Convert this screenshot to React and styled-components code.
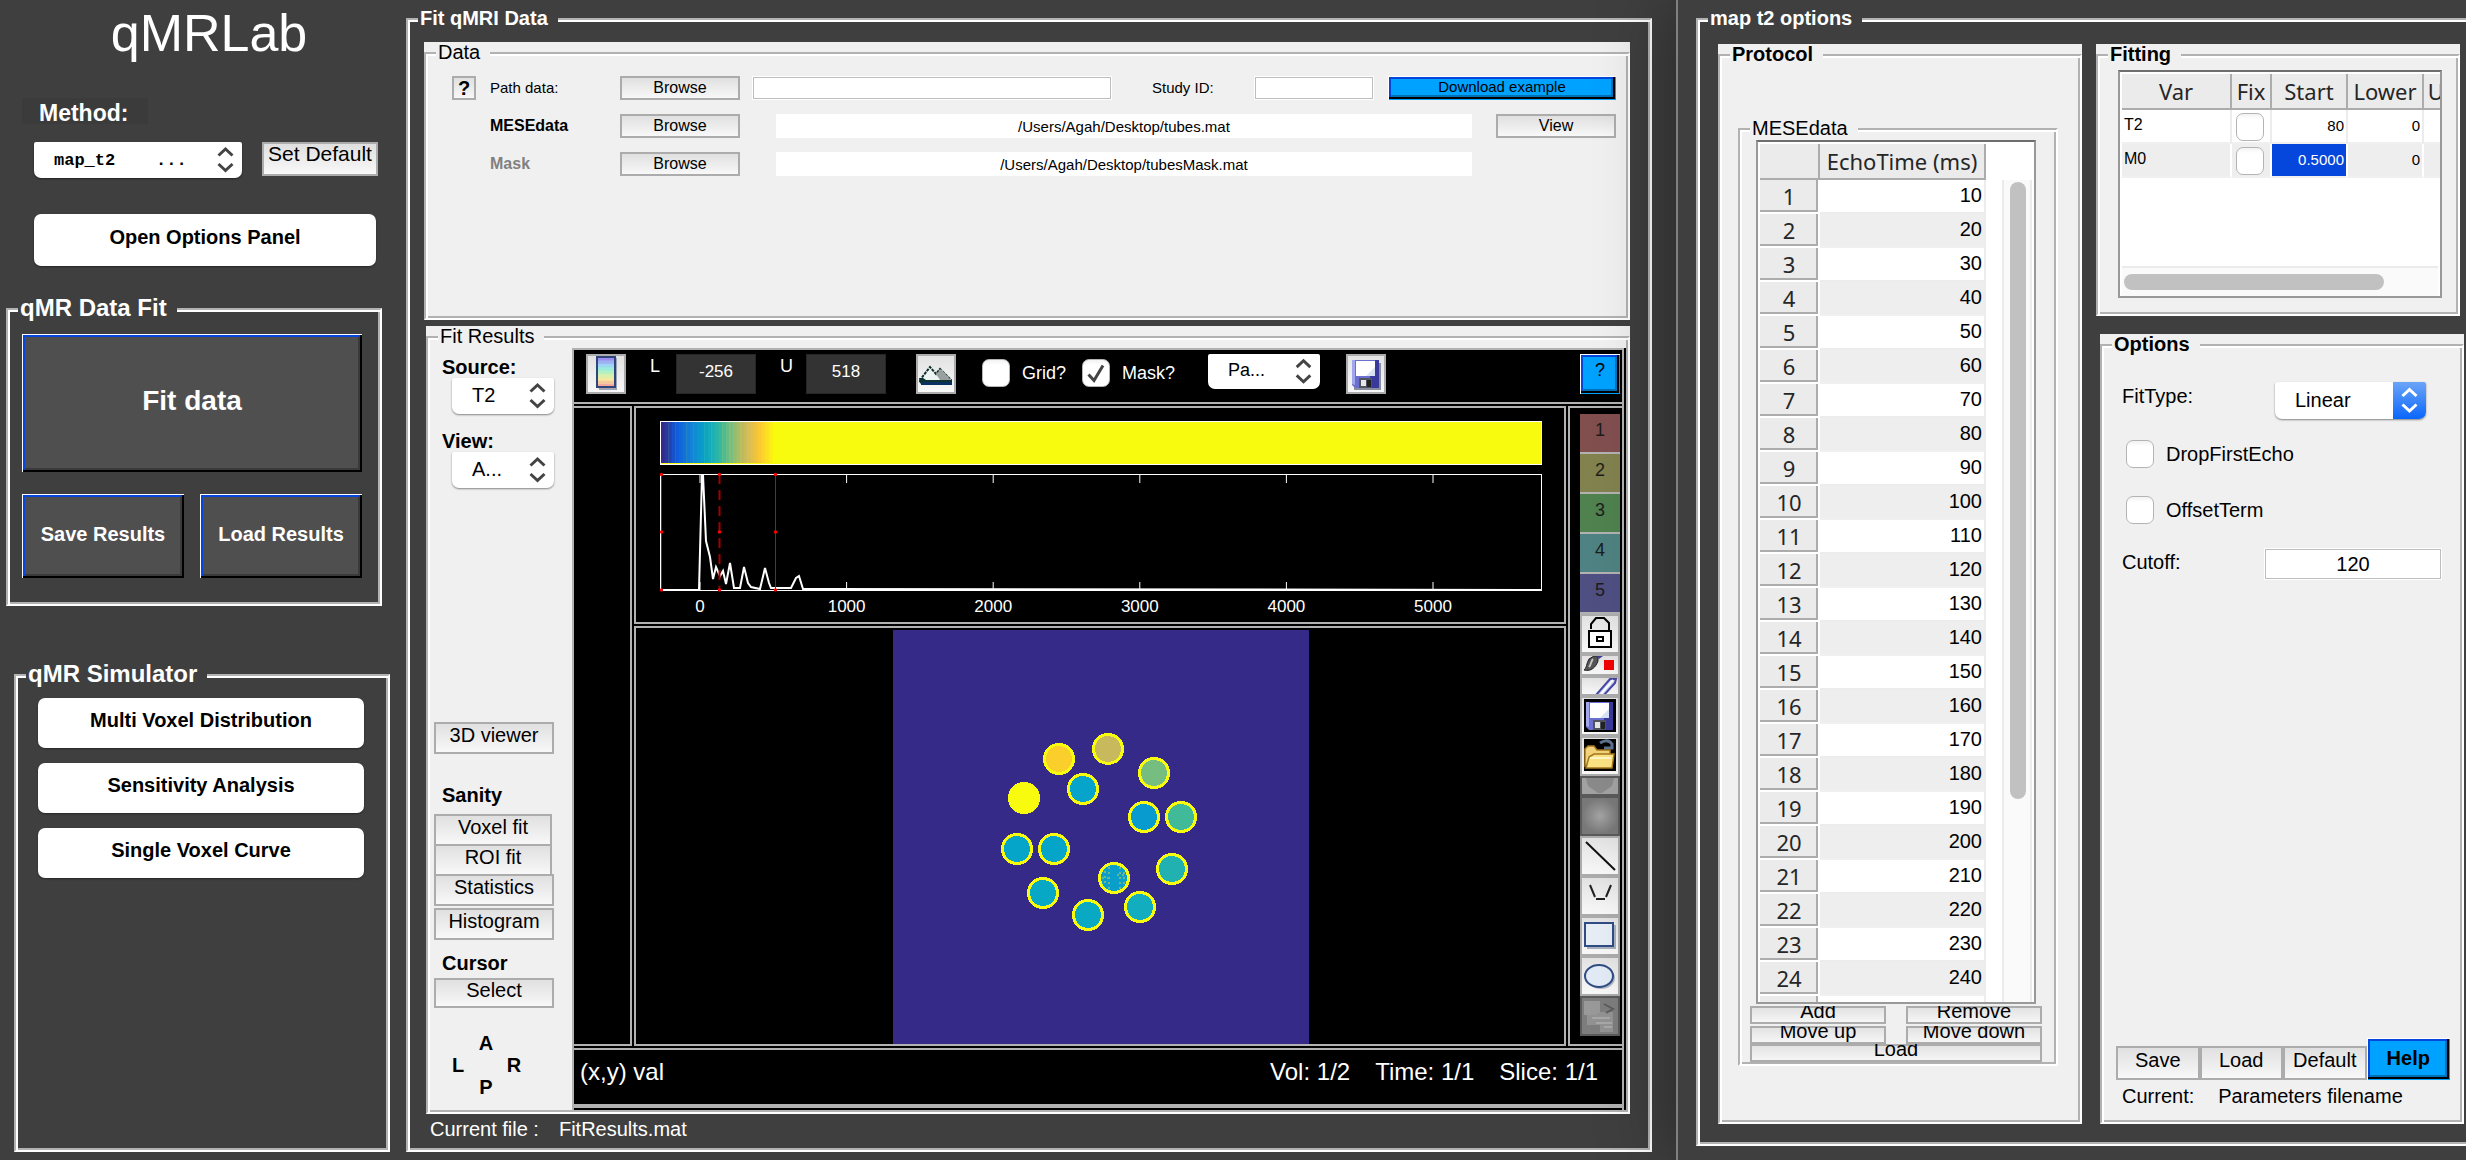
import React from 'react';
import styled, { createGlobalStyle, css } from 'styled-components';

const C = {
  dark: '#3f3f3f',
  light: '#f0f0f0',
  line: '#b2b2b2',
  blue: '#0547dc',
  sky: '#00a2ff',
};

const Global = createGlobalStyle`
  *, *::before, *::after { box-sizing: border-box; }
  html, body { margin: 0; padding: 0; background: ${C.dark}; }
  body, button, input, select, table {
    font-family: "Liberation Sans", Arial, Helvetica, sans-serif;
    font-size: 20px;
    color: #000;
  }
  button, input, select { margin: 0; padding: 0; border: 0; border-radius: 0; }
  h1, h2 { margin: 0; }
`;

/* ---------- shared parts ---------- */

const Etched = styled.fieldset`
  margin: 0;
  padding: 0 2px 2px;
  min-width: 0;
  min-height: 0;
  flex: 1 1 auto;
  display: flex;
  flex-direction: column;
  border: 2px solid;
  border-color: ${C.line} #fff #fff ${C.line};
  box-shadow: inset 2px 2px 0 #fff, inset -2px -2px 0 ${C.line};
`;

const Legend = styled.legend`
  margin-left: 8px;
  padding: 0 10px 2px 2px;
  line-height: 20px;
  font-size: ${(p) => (p.$large ? 24 : 20)}px;
  font-weight: ${(p) => (p.$bold ? 700 : 400)};
  color: ${(p) => (p.$onDark ? '#fff' : '#000')};
  background: ${(p) => (p.$onDark ? C.dark : C.light)};
  white-space: nowrap;
`;

const Sheet = styled.div`
  display: flex;
  flex-direction: column;
  background: ${C.light};
  min-width: 0;
`;

const Button = styled.button`
  display: block;
  width: ${(p) => p.$w || '100%'};
  height: ${(p) => p.$h || 32}px;
  padding-bottom: ${(p) => (p.$lift === undefined ? 6 : p.$lift)}px;
  border: 2px solid #acacac;
  background: linear-gradient(#e0e0e0, #f8f8f8);
  font-size: ${(p) => p.$size || 20}px;
  font-weight: ${(p) => (p.$bold ? 700 : 400)};
  line-height: 20px;
  white-space: nowrap;
`;

const RoundButton = styled.button`
  width: 100%;
  height: ${(p) => p.$h}px;
  padding-bottom: 6px;
  border-radius: 7px;
  background: #fff;
  font-weight: 700;
  box-shadow: 0 1px 2px rgba(0, 0, 0, 0.4);
`;

const DarkButton = styled.button`
  width: 100%;
  height: ${(p) => p.$h}px;
  padding-bottom: 4px;
  background: #4f4f4f;
  color: #fff;
  font-weight: 700;
  font-size: ${(p) => p.$size}px;
  box-shadow: inset 1px 1px 0 #fff, inset -2px -2px 0 #000, inset 3px 3px 0 ${C.blue},
    inset -4px -4px 0 #3a3a3a;
`;

const SkyButton = styled.button`
  width: ${(p) => (p.$w ? `${p.$w}px` : '100%')};
  height: ${(p) => p.$h}px;
  padding-bottom: ${(p) => p.$lift || 0}px;
  background: ${C.sky};
  font-size: ${(p) => p.$size}px;
  font-weight: ${(p) => (p.$bold ? 700 : 400)};
  box-shadow: inset 1px 1px 0 #fff, inset -1px -1px 0 ${C.sky}, inset -3px -3px 0 #000,
    inset 3px 3px 0 ${C.blue}, inset -5px -5px 0 #0072b8;
`;

const TextField = styled.input`
  width: 100%;
  min-width: 0;
  height: ${(p) => p.$h || 24}px;
  background: #fff;
  text-align: center;
  font-size: ${(p) => p.$size || 15}px;
  outline: 0;
  ${(p) =>
    p.$framed &&
    css`
      box-shadow: inset 0 0 0 1px #fff, inset 0 0 0 2px #bdbdbd;
    `}
`;

const PopupWrap = styled.span`
  position: relative;
  display: block;
  flex: none;
  width: ${(p) => p.$w}px;
  height: ${(p) => p.$h}px;
`;

const PopupSelect = styled.select`
  appearance: none;
  width: 100%;
  height: 100%;
  padding: 0 0 ${(p) => p.$lift || 0}px 20px;
  border-radius: 2px 2px 7px 7px;
  background: #fff;
  box-shadow: 0 1px 2px rgba(0, 0, 0, 0.45);
  ${(p) =>
    p.$mono &&
    css`
      font-family: "Liberation Mono", "Courier New", monospace;
      font-size: 17px;
      font-weight: 700;
    `}
  ${(p) => p.$size && css`font-size: ${p.$size}px;`}
`;

const PopupArrows = styled.svg`
  position: absolute;
  top: 0;
  right: 0;
  width: 33px;
  height: 100%;
  pointer-events: none;
  border-radius: 0 2px 7px 0;
  background: ${(p) => (p.$blue ? 'linear-gradient(#6ba5f8, #0a66fb)' : 'none')};
  stroke: ${(p) => (p.$blue ? '#fff' : '#444')};
`;

function Popup({ label, options, w, h, lift, mono, size, blue, id }) {
  return (
    <PopupWrap $w={w} $h={h}>
      <PopupSelect id={id} aria-label={label} $lift={lift} $mono={mono} $size={size}>
        {options.map((o) => (
          <option key={o}>{o}</option>
        ))}
      </PopupSelect>
      <PopupArrows $blue={blue} viewBox="0 0 33 36" fill="none" strokeWidth="3" aria-hidden="true">
        <path d="M9.500 13.500 L16.500 7 L23.500 13.500 M9.500 22 L16.500 28.500 L23.500 22" />
      </PopupArrows>
    </PopupWrap>
  );
}

const TickWrap = styled.span`
  position: relative;
  display: block;
  flex: none;
  width: 28px;
  height: 28px;
  & > svg {
    position: absolute;
    inset: 0;
    pointer-events: none;
  }
`;

const TickInput = styled.input`
  appearance: none;
  display: block;
  width: 28px;
  height: 28px;
  border: 1px solid #b4b4b4;
  border-radius: 7px;
  background: linear-gradient(#f2f2f2, #fff 20%);
`;

function Tick({ id, label, checked }) {
  return (
    <TickWrap>
      <TickInput type="checkbox" id={id} aria-label={label} defaultChecked={checked} />
      {checked && (
        <svg viewBox="0 0 28 28" fill="none" stroke="#444" strokeWidth="3" aria-hidden="true">
          <path d="M6.500 15.500 L12 21.500 L21 6.500" />
        </svg>
      )}
    </TickWrap>
  );
}

/* ---------- page ---------- */

const Page = styled.div`
  display: grid;
  grid-template-columns: 398px minmax(0, 1fr) 790px;
  min-height: 100vh;
  background: ${C.dark};
  overflow: hidden;
`;

/* ---------- side bar ---------- */

const SideBar = styled.aside`
  display: flex;
  flex-direction: column;
  padding: 3px 0 8px;
`;

const Title = styled.h1`
  padding-left: 20px;
  text-align: center;
  color: #fff;
  font-size: 52px;
  font-weight: 400;
  line-height: 60px;
`;

const MethodLabel = styled.label`
  width: 126px;
  height: 26px;
  margin: 35px 0 18px 22px;
  padding: 4px 0 0 17px;
  background: #3b3b3b;
  color: #fff;
  font-size: 23px;
  font-weight: 700;
  line-height: 22px;
`;

const MethodRow = styled.div`
  display: flex;
  gap: 20px;
  padding: 0 20px 36px 34px;
`;

const PanelButtonSlot = styled.div`
  padding: 0 22px 32px 34px;
`;

const FitGroup = styled.div`
  display: flex;
  height: 308px;
  margin: 0 16px 58px 6px;
`;

const FitButtons = styled.div`
  display: flex;
  flex-direction: column;
  gap: 22px;
  padding: 14px 16px 0 12px;
`;

const Pair = styled.div`
  display: flex;
  gap: 16px;
`;

const SimGroup = styled.div`
  flex: 1;
  display: flex;
  margin: 0 8px 0 14px;
`;

const SimButtons = styled.div`
  display: flex;
  flex-direction: column;
  gap: 15px;
  padding: 12px 22px 0 20px;
`;

function Side() {
  return (
    <SideBar>
      <Title>qMRLab</Title>
      <MethodLabel htmlFor="method">Method:</MethodLabel>
      <MethodRow>
        <Popup id="method" w={208} h={36} mono options={['map_t2\u00a0\u00a0\u00a0\u00a0...']} />
        <Button $w="116px" $h={34} $lift={10} $size={21}>Set Default</Button>
      </MethodRow>
      <PanelButtonSlot>
        <RoundButton $h={52}>Open Options Panel</RoundButton>
      </PanelButtonSlot>
      <FitGroup>
        <Etched>
          <Legend $bold $onDark $large>qMR Data Fit</Legend>
          <FitButtons>
            <DarkButton $h={138} $size={28}>Fit data</DarkButton>
            <Pair>
              <DarkButton $h={84} $size={20}>Save Results</DarkButton>
              <DarkButton $h={84} $size={20}>Load Results</DarkButton>
            </Pair>
          </FitButtons>
        </Etched>
      </FitGroup>
      <SimGroup>
        <Etched>
          <Legend $bold $onDark $large>qMR Simulator</Legend>
          <SimButtons>
            <RoundButton $h={50}>Multi Voxel Distribution</RoundButton>
            <RoundButton $h={50}>Sensitivity Analysis</RoundButton>
            <RoundButton $h={50}>Single Voxel Curve</RoundButton>
          </SimButtons>
        </Etched>
      </SimGroup>
    </SideBar>
  );
}

/* ---------- data panel ---------- */

const Main = styled.main`
  display: flex;
  padding: 8px 24px 8px 8px;
  min-width: 0;
`;

const MainBody = styled.div`
  flex: 1;
  display: flex;
  flex-direction: column;
  padding: 12px 18px 0 14px;
`;

const DataSheet = styled(Sheet)`
  height: 278px;
  margin-bottom: 6px;
`;

const DataRows = styled.div`
  display: flex;
  flex-direction: column;
  gap: 14px;
  padding: 12px 10px 0 24px;
`;

const DataRow = styled.div`
  display: grid;
  align-items: center;
  grid-template-columns: 24px 14px 130px 120px ${(p) => p.$rest};
  & > * { grid-row: 1; }
`;

const FieldLabel = styled.label`
  grid-column: ${(p) => p.$col || 3};
  font-size: ${(p) => (p.$bold ? 16 : 15)}px;
  font-weight: ${(p) => (p.$bold ? 700 : 400)};
  color: ${(p) => (p.$muted ? '#808080' : '#000')};
  line-height: 24px;
`;

const Cell = styled.div`
  grid-column: ${(p) => p.$col};
  display: flex;
`;

function DataPanel() {
  return (
    <DataSheet>
      <Etched>
        <Legend>Data</Legend>
        <DataRows>
          <DataRow $rest="12px minmax(0, 1fr) 40px 62px 40px 120px 14px 228px">
            <Cell $col={1}><Button $h={24} $lift={4} $bold>?</Button></Cell>
            <FieldLabel htmlFor="path">Path data:</FieldLabel>
            <Cell $col={4}><Button $h={24} $lift={3} $size={16}>Browse</Button></Cell>
            <Cell $col={6}><TextField id="path" $framed /></Cell>
            <FieldLabel $col={8} htmlFor="study">Study ID:</FieldLabel>
            <Cell $col={10}><TextField id="study" $framed /></Cell>
            <Cell $col={12}><SkyButton $w={228} $h={24} $size={15} $lift={3}>Download example</SkyButton></Cell>
          </DataRow>
          <DataRow $rest="36px minmax(0, 1fr) 24px 120px">
            <FieldLabel $bold htmlFor="mese">MESEdata</FieldLabel>
            <Cell $col={4}><Button $h={24} $lift={3} $size={16}>Browse</Button></Cell>
            <Cell $col={6}><TextField id="mese" defaultValue="/Users/Agah/Desktop/tubes.mat" /></Cell>
            <Cell $col={8}><Button $h={24} $lift={3} $size={16}>View</Button></Cell>
          </DataRow>
          <DataRow $rest="36px minmax(0, 1fr) 24px 120px">
            <FieldLabel $bold $muted htmlFor="mask">Mask</FieldLabel>
            <Cell $col={4}><Button $h={24} $lift={3} $size={16}>Browse</Button></Cell>
            <Cell $col={6}><TextField id="mask" defaultValue="/Users/Agah/Desktop/tubesMask.mat" /></Cell>
          </DataRow>
        </DataRows>
      </Etched>
    </DataSheet>
  );
}

/* ---------- results panel ---------- */

const ResultSheet = styled(Sheet)`
  flex: 1;
  margin-left: 2px;
`;

const ResultBody = styled.div`
  flex: 1;
  display: flex;
`;

const ToolColumn = styled.div`
  flex: none;
  width: 142px;
  display: flex;
  flex-direction: column;
  padding: 8px 18px 12px 4px;
`;

const ColumnLabel = styled.label`
  padding-left: 8px;
  font-weight: 700;
  line-height: 22px;
`;

const ColumnPopup = styled.div`
  padding: 0 0 16px 18px;
`;

const ColumnHeading = styled.h2`
  padding: 0 0 0 8px;
  margin-top: ${(p) => p.$top}px;
  margin-bottom: ${(p) => p.$bottom}px;
  font-size: 20px;
  font-weight: 700;
  line-height: 22px;
`;

const Spacer = styled.div`
  flex: 1;
`;

const Stack = styled.div`
  display: flex;
  flex-direction: column;
  & > button + button { margin-top: -2px; }
  & > button:last-child { margin-top: 2px; }
`;

const Compass = styled.div`
  display: grid;
  grid-template-columns: repeat(3, 28px);
  margin: 24px 0 0 10px;
  text-align: center;
  font-weight: 700;
  line-height: 22px;
`;

const Mark = styled.span`
  grid-column: ${(p) => p.$c};
  grid-row: ${(p) => p.$r};
`;

const Viewer = styled.div`
  flex: 1;
  min-width: 0;
  display: grid;
  gap: 2px;
  grid-template-columns: 58px minmax(0, 1fr) 54px;
  grid-template-rows: 54px 218px minmax(0, 1fr) 60px;
  padding-bottom: 2px;
  margin-right: 2px;
  background: #000;
  color: #fff;
  border: 2px solid ${C.line};
  border-bottom: 0;
  box-shadow: 2px 0 0 #000;
`;

const ToolBar = styled.div`
  grid-column: 1 / -1;
  display: flex;
  align-items: flex-start;
  padding: 4px 2px 0 12px;
  border-bottom: 2px solid ${C.line};
`;

const Pane = styled.div`
  border: 2px solid ${C.line};
  overflow: hidden;
  & > svg { display: block; width: 100%; height: 100%; }
`;

const LeftStrip = styled(Pane)`
  grid-column: 1;
  grid-row: 2 / 4;
  border-left: 0;
`;

const Rail = styled.div`
  grid-column: 3;
  grid-row: 2 / 4;
  border: 2px solid ${C.line};
  border-right: 0;
  padding: 6px 2px 0 10px;
`;

const StatusBar = styled.div`
  grid-column: 1 / -1;
  display: flex;
  gap: 25px;
  padding: 7px 24px 0 6px;
  border-top: 2px solid ${C.line};
  border-bottom: 4px solid ${C.line};
  font-size: 24px;
  line-height: 30px;
`;

const StatusGrow = styled.span`
  flex: 1;
`;

const IconButton = styled.button`
  display: block;
  flex: none;
  width: 40px;
  height: ${(p) => p.$h || 40}px;
  margin-left: ${(p) => p.$before || 0}px;
  border: 2px solid ${(p) => (p.$off ? '#5a5a5a' : '#acacac')};
  background: ${(p) => (p.$off ? '#7d7d7d' : 'linear-gradient(#e2e2e2, #f8f8f8)')};
  overflow: hidden;
  & > svg { display: block; width: 36px; height: 100%; }
`;

const LimitLabel = styled.label`
  width: 26px;
  margin-left: 24px;
  font-size: 18px;
  line-height: 24px;
`;

const LimitField = styled.input`
  width: 80px;
  height: 40px;
  padding-bottom: 4px;
  border: 1px solid #262626;
  background: #333;
  color: #fff;
  text-align: center;
  font-size: 17px;
`;

const ToolCheck = styled.label`
  display: flex;
  gap: 12px;
  align-items: center;
  margin: 5px 0 0 ${(p) => p.$before}px;
  font-size: 18px;
  line-height: 28px;
`;

const ToolPopup = styled.div`
  margin-left: 33px;
`;

const HelpSlot = styled.div`
  margin-left: auto;
`;

const RoiButton = styled.button`
  display: block;
  width: 40px;
  height: 38px;
  margin-bottom: 2px;
  padding-bottom: 6px;
  background: ${(p) => p.$color};
  color: #1c1c1c;
  font-size: 18px;
  box-shadow: 0 2px 0 ${C.line};
`;

function Floppy({ black }) {
  return (
    <svg viewBox="0 0 36 36" preserveAspectRatio="none" aria-hidden="true">
      {black ? (
        <rect x="2" y="1" width="32" height="33" fill="#000" />
      ) : (
        <path d="M6 7 H33 V34 H6 Z" fill="#8a8fa0" />
      )}
      <path d="M4 4 H31 V32 H7 L4 29 Z" fill="#6b6fd0" />
      <path d="M4 4 H7 V29 L4 28 Z" fill="#a2a6ee" />
      <path d="M27 4 H31 V32 H22 V20 H27 Z" fill="#3a3a9c" />
      <rect x="8" y="5" width="19" height="15" fill="#fff" />
      <path d="M18 20 L27 11 V20 Z" fill="#d8e4f6" />
      <rect x="11" y="22" width="13" height="10" fill="#50545f" />
      <rect x="13" y="24" width="5" height="6" fill="#e6e6e6" />
      <rect x="19" y="24" width="4" height="7" fill="#222" />
    </svg>
  );
}

function ColorBarIcon() {
  const bands = ['#9a8cf0', '#9db0f2', '#9cd6f4', '#9cecdc', '#b4f0c0', '#d6f0b0', '#f2e8a0', '#f6c89c', '#f4a8a0'];
  return (
    <svg viewBox="0 0 36 36" preserveAspectRatio="none" aria-hidden="true">
      <rect x="11" y="2" width="18" height="32" fill="#9aa4b4" />
      {bands.map((b, i) => (
        <rect key={b} x="9" y={1 + i * 3.4} width="18" height="4" fill={b} />
      ))}
      <rect x="9" y="1" width="18" height="30" fill="none" stroke="#2f4478" strokeWidth="2" />
    </svg>
  );
}

function PeaksIcon() {
  return (
    <svg viewBox="0 0 36 36" preserveAspectRatio="none" aria-hidden="true">
      <path d="M2 25 L5 20 L12 11 L18 18 L22 13 L33 24 V28 H4 Z" fill="#eef4f4" stroke="#0d2c2c" strokeWidth="2" strokeDasharray="3 1" />
      <path d="M18 18 L23 13 L33 24 H22 Z" fill="#9aa0a0" />
      <path d="M1 22 H5 L8 24 H34 V27 H2 Z" fill="#0d3330" />
      <path d="M3 26 H34 V29 H3 Z" fill="#0a2f62" />
    </svg>
  );
}

const railIcons = [
  ['Lock', 40, false, (
    <svg viewBox="0 0 36 36" fill="none" stroke="#000" strokeWidth="2" aria-hidden="true">
      <path d="M9 13 V8 L14 2 H22 L27 7 V14" />
      <rect x="7" y="15" width="22" height="16" fill="#fff" />
      <rect x="15" y="21" width="6" height="4" />
    </svg>
  )],
  ['Brush', 22, false, (
    <svg viewBox="0 0 36 18" aria-hidden="true">
      <path d="M2 14 C5 12 4 8 7 3 L12 0 H16 V5 C14 11 9 16 2 14 Z" fill="#555" stroke="#222" />
      <path d="M7 11 C9 9 9 5 11 3" stroke="#c4c4c4" strokeWidth="2" fill="none" />
      <path d="M15 0 L21 0 L17 3 Z" fill="#3c3c9c" />
      <rect x="22" y="4" width="10" height="10" fill="#f00000" />
    </svg>
  )],
  ['Pencil', 20, false, (
    <svg viewBox="0 0 36 16" aria-hidden="true">
      <path d="M14 17 L28 1 L34 1 L33 5 L22 17 Z" fill="#c8ccf4" stroke="#4648a4" strokeWidth="2" />
      <path d="M19 16 L31 2" stroke="#fff" strokeWidth="2" />
    </svg>
  )],
  ['Save mask', 40, false, <Floppy key="f" black />],
  ['Open mask', 40, false, (
    <svg viewBox="0 0 36 36" aria-hidden="true">
      <rect x="2" y="1" width="32" height="32" fill="#000" />
      <path d="M18 5 Q26 0 30 6 V10 H22" fill="none" stroke="#5c7290" strokeWidth="3" />
      <path d="M3 11 L6 8 H12 L15 12 H28 V26 H6 L3 28 Z" fill="#f2d27a" stroke="#a4781c" strokeWidth="1.500" />
      <path d="M7 19 L12 16 H32 L30 30 H4 Z" fill="#fbe384" stroke="#a4781c" strokeWidth="1.500" />
      <path d="M8 20 H29" stroke="#fff6c8" strokeWidth="2" />
    </svg>
  )],
  ['Shield', 20, true, (
    <svg viewBox="0 0 36 16" aria-hidden="true">
      <rect width="36" height="16" fill="#a2a2a2" />
      <path d="M4 0 H32 L30 8 L20 15 H16 L6 8 Z" fill="#8a8a8a" />
    </svg>
  )],
  ['Smooth', 40, true, (
    <svg viewBox="0 0 36 36" aria-hidden="true">
      <defs>
        <radialGradient id="glow">
          <stop offset="0" stopColor="#a4a4a4" />
          <stop offset="1" stopColor="#787878" />
        </radialGradient>
      </defs>
      <rect width="36" height="36" fill="url(#glow)" />
    </svg>
  )],
  ['Line', 40, false, (
    <svg viewBox="0 0 36 36" aria-hidden="true">
      <path d="M4 4 L33 32" stroke="#111" strokeWidth="2" />
    </svg>
  )],
  ['Polygon', 40, false, (
    <svg viewBox="0 0 36 36" fill="none" stroke="#222" strokeWidth="2" aria-hidden="true">
      <path d="M8 7 L13 19 M14 21 H23 M24 19 L29 7" />
    </svg>
  )],
  ['Rectangle', 40, false, (
    <svg viewBox="0 0 36 36" aria-hidden="true">
      <rect x="5" y="7" width="29" height="24" fill="#a8b0bc" />
      <rect x="3" y="5" width="28" height="23" fill="#e6edf5" stroke="#2f4c84" strokeWidth="2" />
    </svg>
  )],
  ['Ellipse', 40, false, (
    <svg viewBox="0 0 36 36" aria-hidden="true">
      <ellipse cx="19" cy="20" rx="14" ry="11" fill="#b0b8c4" />
      <ellipse cx="17" cy="18" rx="14" ry="11" fill="#e2eaf5" stroke="#2f4c84" strokeWidth="2" />
    </svg>
  )],
  ['Paste', 40, true, (
    <svg viewBox="0 0 36 36" aria-hidden="true">
      <rect x="2" y="3" width="16" height="14" fill="#999" />
      <path d="M5 17 H14 L18 14 H31 V34 H18 V27 H5 Z" fill="#929292" />
      <path d="M22 6 L31 11 L24 15" fill="none" stroke="#5c5c5c" strokeWidth="2" />
      <path d="M10 20 H28 M14 25 H30 M22 29 H30" stroke="#a8a8a8" strokeWidth="2" />
    </svg>
  )],
];

const parula = [
  [53, 42, 135], [15, 92, 221], [20, 129, 214], [6, 164, 202], [46, 183, 164],
  [135, 191, 119], [209, 187, 89], [254, 200, 50], [249, 251, 14],
];

function parulaAt(t) {
  const p = Math.min(t, 0.9999) * 8;
  const i = Math.floor(p);
  const mix = parula[i].map((v, k) => Math.round(v + (parula[i + 1][k] - v) * (p - i)));
  return `rgb(${mix.join(',')})`;
}

const histLine =
  '26,182 63,182 66,67 67,67 70,133 74,149 77,171 80,159 84,168 87,163 90,176 94,155 98,180 104,180 108,159 112,175 115,179 124,181 129,160 133,175 135,180 155,180 160,170 163,168 167,181 190,181 905,182';

function Histogram() {
  const steps = 32;
  return (
    <svg viewBox="0 0 928 214" role="img" aria-label="Histogram">
      <rect x="24" y="13" width="882" height="43" fill="#f8fb0e" />
      {Array.from({ length: steps }, (_, i) => (
        <rect key={i} x={25 + i * 3.6} y="14" width="4" height="41" fill={parulaAt(i / (steps - 1))} />
      ))}
      <rect x="24.500" y="13.500" width="881" height="43" fill="none" stroke="#fff" />
      <rect x="24.500" y="66.500" width="881" height="116" fill="none" stroke="#fff" />
      {[0, 1000, 2000, 3000, 4000, 5000].map((v) => {
        const x = 64 + v * 0.1466;
        return (
          <g key={v}>
            <path d={`M${x} 67 V75 M${x} 182 V174`} stroke="#fff" strokeWidth="1" />
            <text x={x} y="204" fill="#fff" fontSize="17" textAnchor="middle">{v}</text>
          </g>
        );
      })}
      <polyline points={histLine} fill="none" stroke="#fff" strokeWidth="2" />
      <g stroke="#d40000" strokeWidth="1">
        <path d="M25.500 66 V182 M139.500 66 V182" />
        <path d="M83.500 66 V182" strokeDasharray="10 6" stroke="#a00000" strokeWidth="2" />
      </g>
      {[25.5, 83.5, 139.5].map((x) =>
        [66.5, 124, 182].map((y) => <circle key={`${x}-${y}`} cx={x} cy={y} r="1.700" fill="#f00" />)
      )}
    </svg>
  );
}

const tubes = [
  [423, 131, '#fbcf2b'], [472, 121, '#c8ba5c'], [518, 145, '#76be7f'], [388, 170, '#f8fb0e'],
  [447, 161, '#06a3cb'], [508, 189, '#089bd0'], [545, 189, '#40ba98'], [381, 221, '#05a5c9'],
  [418, 221, '#05a5c9'], [536, 241, '#21b1b0'], [478, 250, '#0a9ecb'], [407, 265, '#07a7c6'],
  [452, 287, '#09a9c4'], [504, 279, '#12adbf'],
];

function TubeImage() {
  return (
    <svg viewBox="0 0 928 416" role="img" aria-label="T2 map" shapeRendering="crispEdges">
      <rect x="257" y="2" width="416" height="414" fill="#352a87" />
      {tubes.map(([x, y, c]) => (
        <circle key={`${x}-${y}`} cx={x} cy={y} r="14.500" fill={c} stroke="#f8fb0e" strokeWidth="3" />
      ))}
      <path
        d="M469 243 V256 M473 239 V261 M484 239 V261 M488 244 V257 M466 250 H476 M481 247 H491"
        stroke="#6ab890"
        strokeWidth="2"
        strokeDasharray="2 3"
        fill="none"
      />
    </svg>
  );
}

const CurrentFile = styled.div`
  display: flex;
  gap: 20px;
  padding: 0 0 4px 6px;
  color: #fff;
  line-height: 30px;
`;

function Results() {
  return (
    <ResultSheet>
      <Etched>
        <Legend>Fit Results</Legend>
        <ResultBody>
          <ToolColumn>
            <ColumnLabel htmlFor="source">Source:</ColumnLabel>
            <ColumnPopup><Popup id="source" w={102} h={36} lift={2} options={['T2']} /></ColumnPopup>
            <ColumnLabel htmlFor="view">View:</ColumnLabel>
            <ColumnPopup><Popup id="view" w={102} h={36} lift={2} options={['A...']} /></ColumnPopup>
            <Spacer />
            <Button>3D viewer</Button>
            <ColumnHeading $top={30} $bottom={8}>Sanity</ColumnHeading>
            <Stack>
              <Button $w="118px">Voxel fit</Button>
              <Button $w="118px">ROI fit</Button>
              <Button>Statistics</Button>
              <Button>Histogram</Button>
            </Stack>
            <ColumnHeading $top={12} $bottom={4}>Cursor</ColumnHeading>
            <Button $h={30}>Select</Button>
            <Compass>
              <Mark $c={2} $r={1}>A</Mark>
              <Mark $c={1} $r={2}>L</Mark>
              <Mark $c={3} $r={2}>R</Mark>
              <Mark $c={2} $r={3}>P</Mark>
            </Compass>
          </ToolColumn>
          <Viewer>
            <ToolBar>
              <IconButton aria-label="Colormap"><ColorBarIcon /></IconButton>
              <LimitLabel htmlFor="low">L</LimitLabel>
              <LimitField id="low" defaultValue="-256" />
              <LimitLabel htmlFor="up">U</LimitLabel>
              <LimitField id="up" defaultValue="518" />
              <IconButton $before={30} aria-label="Histogram"><PeaksIcon /></IconButton>
              <ToolCheck $before={26}><Tick />Grid?</ToolCheck>
              <ToolCheck $before={16}><Tick checked />Mask?</ToolCheck>
              <ToolPopup>
                <Popup label="Colormap name" w={112} h={35} lift={3} size={18} options={['Pa...']} />
              </ToolPopup>
              <IconButton $before={26} aria-label="Save"><Floppy /></IconButton>
              <HelpSlot><SkyButton $w={40} $h={40} $size={18} $lift={8}>?</SkyButton></HelpSlot>
            </ToolBar>
            <LeftStrip />
            <Pane><Histogram /></Pane>
            <Rail>
              {['#824f4f', '#82824f', '#4f824f', '#4f8282', '#4f4f82'].map((c, i) => (
                <RoiButton key={c} $color={c}>{i + 1}</RoiButton>
              ))}
              {railIcons.map(([name, h, off, icon]) => (
                <IconButton key={name} aria-label={name} $h={h} $off={off}>{icon}</IconButton>
              ))}
            </Rail>
            <Pane><TubeImage /></Pane>
            <StatusBar>
              <StatusGrow>(x,y) val</StatusGrow>
              <span>Vol: 1/2</span>
              <span>Time: 1/1</span>
              <span>Slice: 1/1</span>
            </StatusBar>
          </Viewer>
        </ResultBody>
      </Etched>
    </ResultSheet>
  );
}

/* ---------- options window ---------- */

const OptionsWindow = styled.section`
  position: relative;
  display: flex;
  min-width: 0;
  padding: 8px 0 14px 18px;
  border-left: 2px solid #808080;
  background: ${C.dark};
  box-shadow: 0 0 70px rgba(0, 0, 0, 0.4);
  overflow: hidden;
`;

const WideEtched = styled(Etched)`
  margin-right: -20px;
`;

const OptionsBody = styled.div`
  flex: 1;
  min-height: 0;
  display: grid;
  grid-template-columns: minmax(0, 364fr) minmax(0, 368fr);
  gap: 14px;
  padding: 14px 18px 18px;
`;

const ProtocolBody = styled.div`
  flex: 1;
  display: flex;
  padding: 52px 20px 54px 16px;
`;

const TableFrame = styled.div`
  display: flex;
  overflow: hidden;
  border: 2px solid #999;
  border-top-color: #6e6e6e;
  background: #fff;
`;

const EchoFrame = styled(TableFrame)`
  flex: 1 1 0;
  height: 0;
  min-height: 0;
  margin: 0 18px 2px 14px;
  padding: 2px 2px 0;
  justify-content: space-between;
`;

const Grid = styled.table`
  table-layout: fixed;
  border-spacing: 0;
  width: ${(p) => p.$w}px;
  flex: none;
  align-self: flex-start;
`;

const HeadCell = styled.th`
  width: ${(p) => p.$w}px;
  height: ${(p) => p.$h}px;
  padding: 0;
  background: #ebebeb;
  border-right: 2px solid #acacac;
  border-bottom: 2px solid #acacac;
  color: #262626;
  font-family: "Noto Sans", "Open Sans", sans-serif;
  font-size: 22px;
  font-weight: 400;
  line-height: 30px;
  white-space: nowrap;
`;

const RowHead = styled.th`
  height: 34px;
  padding: 0;
  background: #ebebeb;
  border-bottom: 2px solid #fff;
  border-right: 2px solid #fff;
  box-shadow: inset -2px -2px 0 #acacac;
  color: #262626;
  font-family: "Noto Sans", "Open Sans", sans-serif;
  font-size: 22px;
  font-weight: 400;
  line-height: 30px;
`;

const EchoCell = styled.td`
  height: 34px;
  padding: 0 2px 2px 0;
  border-right: 2px solid #ececec;
  border-bottom: 2px solid ${(p) => (p.$alt ? '#f0f0f0' : '#ececec')};
  background: ${(p) => (p.$alt ? '#eeeeee' : '#fff')};
  text-align: right;
  line-height: 26px;
`;

const ScrollTrack = styled.div`
  width: 30px;
  margin: 36px 0 0;
  padding: 2px 4px 0 6px;
  border: 2px solid #ebebeb;
  border-width: 0 2px;
  background: #fafafa;
`;

const ScrollThumb = styled.div`
  width: 16px;
  height: 617px;
  border-radius: 8px;
  background: #c1c1c1;
`;

const TableButtons = styled.div`
  display: grid;
  grid-template-columns: 1fr 1fr;
  column-gap: 20px;
  padding: 0 12px 0 8px;
`;

const SlimButton = styled.button`
  height: 18px;
  margin-bottom: ${(p) => p.$below || 0}px;
  padding-bottom: 8px;
  overflow: hidden;
  background: linear-gradient(#e0e0e0, #f8f8f8);
  box-shadow: inset 0 0 0 2px #acacac;
  line-height: 10px;
  ${(p) => p.$wide && css`grid-column: 1 / -1;`}
`;

const RightColumn = styled.div`
  display: flex;
  flex-direction: column;
  gap: 18px;
  min-width: 0;
`;

const FittingSheet = styled(Sheet)`
  height: 272px;
  margin-right: 4px;
`;

const FittingFrame = styled(TableFrame)`
  flex-direction: column;
  height: 228px;
  margin: 4px 14px 0 18px;
  padding: 2px 2px 0;
`;

const FitCell = styled.td`
  height: 34px;
  padding: ${(p) => (p.$name ? '0 0 2px 2px' : '0 2px 0 0')};
  border-right: 2px solid ${(p) => (p.$alt ? '#fff' : '#ececec')};
  border-bottom: 2px solid #f0f0f0;
  background: ${(p) => (p.$picked ? C.blue : p.$alt ? '#eeeeee' : '#fff')};
  color: ${(p) => (p.$picked ? '#fff' : '#000')};
  font-size: ${(p) => (p.$name ? 16 : 15)}px;
  line-height: 28px;
  text-align: ${(p) => (p.$name ? 'left' : 'right')};
`;

const FixCell = styled(FitCell)`
  padding: 1px 0 0 4px;
`;

const HTrack = styled.div`
  margin-top: auto;
  height: 30px;
  padding: 6px 0 0 2px;
  border-top: 2px solid #ebebeb;
  background: #fafafa;
`;

const HThumb = styled.div`
  width: 260px;
  height: 16px;
  border-radius: 8px;
  background: #c1c1c1;
`;

const OptionSheet = styled(Sheet)`
  flex: 1;
  margin-left: 4px;
`;

const OptionBody = styled.div`
  flex: 1;
  display: flex;
  flex-direction: column;
  padding: 26px 18px 10px;
`;

const OptionRow = styled.div`
  display: flex;
  align-items: center;
  justify-content: space-between;
  height: ${(p) => p.$h}px;
  margin-bottom: ${(p) => p.$below || 0}px;
  padding-right: ${(p) => p.$right || 0}px;
`;

const OptionLabel = styled.label`
  line-height: 24px;
  padding-bottom: ${(p) => (p.$up ? 10 : 4)}px;
`;

const OptionCheck = styled.label`
  display: flex;
  align-items: center;
  gap: 12px;
  height: 28px;
  margin-bottom: ${(p) => p.$below}px;
  padding-left: 4px;
`;

const CutoffSlot = styled.div`
  width: 178px;
`;

const FileButtons = styled.div`
  display: grid;
  grid-template-columns: repeat(4, 1fr);
  align-items: end;
  margin: auto -8px 0 -6px;
`;

const ParamFile = styled.div`
  display: flex;
  gap: 24px;
  padding-top: 2px;
  line-height: 28px;
`;

function Options() {
  return (
    <OptionsWindow>
      <WideEtched>
        <Legend $bold $onDark>map t2 options</Legend>
        <OptionsBody>
          <Sheet>
            <Etched>
              <Legend $bold>Protocol</Legend>
              <ProtocolBody>
                <Etched>
                  <Legend>MESEdata</Legend>
                  <EchoFrame>
                    <Grid $w={226}>
                      <thead>
                        <tr>
                          <HeadCell $w={60} $h={36} aria-label="Index" />
                          <HeadCell $w={166} $h={36}>EchoTime (ms)</HeadCell>
                        </tr>
                      </thead>
                      <tbody>
                        {Array.from({ length: 24 }, (_, i) => (
                          <tr key={i}>
                            <RowHead scope="row">{i + 1}</RowHead>
                            <EchoCell $alt={i % 2 === 1}>{(i + 1) * 10}</EchoCell>
                          </tr>
                        ))}
                        <tr>
                          <RowHead />
                          <EchoCell />
                        </tr>
                      </tbody>
                    </Grid>
                    <ScrollTrack><ScrollThumb /></ScrollTrack>
                  </EchoFrame>
                  <TableButtons>
                    <SlimButton $below={2}>Add</SlimButton>
                    <SlimButton $below={2}>Remove</SlimButton>
                    <SlimButton>Move up</SlimButton>
                    <SlimButton>Move down</SlimButton>
                    <SlimButton $wide>Load</SlimButton>
                  </TableButtons>
                </Etched>
              </ProtocolBody>
            </Etched>
          </Sheet>
          <RightColumn>
            <FittingSheet>
              <Etched>
                <Legend $bold>Fitting</Legend>
                <FittingFrame>
                  <Grid $w={376}>
                    <thead>
                      <tr>
                        <HeadCell $w={110} $h={36}>Var</HeadCell>
                        <HeadCell $w={40} $h={36}>Fix</HeadCell>
                        <HeadCell $w={76} $h={36}>Start</HeadCell>
                        <HeadCell $w={76} $h={36}>Lower</HeadCell>
                        <HeadCell $w={74} $h={36}>Upper</HeadCell>
                      </tr>
                    </thead>
                    <tbody>
                      <tr>
                        <FitCell $name>T2</FitCell>
                        <FixCell><Tick label="Fix T2" /></FixCell>
                        <FitCell>80</FitCell>
                        <FitCell>0</FitCell>
                        <FitCell />
                      </tr>
                      <tr>
                        <FitCell $name $alt>M0</FitCell>
                        <FixCell $alt><Tick label="Fix M0" /></FixCell>
                        <FitCell $alt $picked>0.5000</FitCell>
                        <FitCell $alt>0</FitCell>
                        <FitCell $alt />
                      </tr>
                    </tbody>
                  </Grid>
                  <HTrack><HThumb /></HTrack>
                </FittingFrame>
              </Etched>
            </FittingSheet>
            <OptionSheet>
              <Etched>
                <Legend $bold>Options</Legend>
                <OptionBody>
                  <OptionRow $h={37} $below={21} $right={16}>
                    <OptionLabel $up htmlFor="fittype">FitType:</OptionLabel>
                    <Popup id="fittype" w={151} h={37} lift={2} blue options={['Linear']} />
                  </OptionRow>
                  <OptionCheck $below={28}><Tick />DropFirstEcho</OptionCheck>
                  <OptionCheck $below={24}><Tick />OffsetTerm</OptionCheck>
                  <OptionRow $h={32}>
                    <OptionLabel htmlFor="cutoff">Cutoff:</OptionLabel>
                    <CutoffSlot><TextField id="cutoff" $framed $h={32} $size={20} defaultValue="120" /></CutoffSlot>
                  </OptionRow>
                  <FileButtons>
                    <Button $h={34}>Save</Button>
                    <Button $h={34}>Load</Button>
                    <Button $h={34}>Default</Button>
                    <SkyButton $h={42} $size={20} $lift={2} $bold>Help</SkyButton>
                  </FileButtons>
                  <ParamFile>
                    <span>Current:</span>
                    <span>Parameters filename</span>
                  </ParamFile>
                </OptionBody>
              </Etched>
            </OptionSheet>
          </RightColumn>
        </OptionsBody>
      </WideEtched>
    </OptionsWindow>
  );
}

export default function App() {
  return (
    <>
      <Global />
      <Page>
        <Side />
        <Main>
          <Etched>
            <Legend $bold $onDark>Fit qMRI Data</Legend>
            <MainBody>
              <DataPanel />
              <Results />
              <CurrentFile>
                <span>Current file :</span>
                <span>FitResults.mat</span>
              </CurrentFile>
            </MainBody>
          </Etched>
        </Main>
        <Options />
      </Page>
    </>
  );
}
